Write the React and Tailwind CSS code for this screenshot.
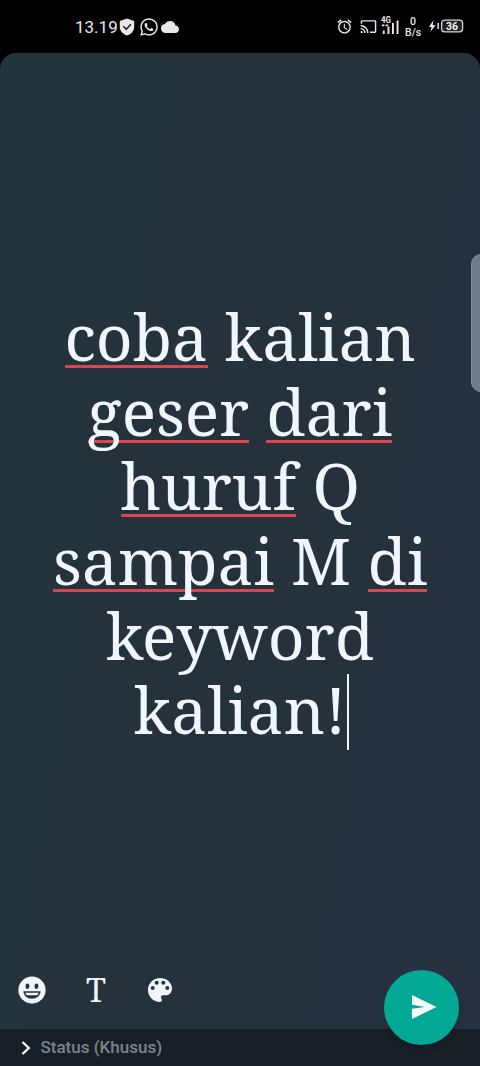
import React from "react";
import { MdAccessAlarm, MdCast, MdCloud } from "react-icons/md";
import { FaWhatsapp } from "react-icons/fa";

const lines = [
  [{ text: "coba", typo: true, width: "w-[143px]" }, { text: "kalian", width: "w-[190px]" }],
  [{ text: "geser", typo: true, width: "w-[161px]" }, { text: "dari", typo: true, width: "w-[126px]" }],
  [{ text: "huruf", typo: true, width: "w-[175px]" }, { text: "Q", width: "w-[46px]" }],
  [
    { text: "sampai", typo: true, width: "w-[221px]" },
    { text: "M", width: "w-[59px]" },
    { text: "di", typo: true, width: "w-[59px]" },
  ],
  [{ text: "keyword", width: "w-[266px]" }],
  [{ text: "kalian!", width: "w-[212px]", cursor: true }],
];

const ShieldIcon = () => (
  <svg viewBox="0 0 16 18" className="w-[16px] h-[18px]">
    <path d="M8 .5 15.200 3v6c0 4-3 7-7.200 8.600C3.800 16 .8 13 .8 9V3z" fill="#e8e8e8" />
    <path d="m4.300 8.300 2.900 2.900 4.700-4.900" fill="none" stroke="#111" strokeWidth="1.400" />
  </svg>
);

const SignalIcon = () => (
  <svg viewBox="0 0 18 18" className="w-[18px] h-[18px]" fill="#e8e8e8">
    <path d="M1.800 14.500h1.900V18H1.800zM6.500 10.500h1.900V18H6.500zM11 7h1.900v11H11zM15.600 4.500h1.900V18h-1.900z" />
    <path d="M.8 8.500h2.600v1.800H.8zM4.600 8.500h2.600v1.800H4.600z" />
    <text x="0" y="7" fontSize="8.500" fontWeight="700" fontFamily="Roboto, sans-serif" textLength="10" lengthAdjust="spacingAndGlyphs">
      4G
    </text>
  </svg>
);

const GrinIcon = () => (
  <svg viewBox="0 0 28 28" className="w-7 h-7">
    <circle cx="14" cy="14" r="13.600" fill="#f1f6fc" />
    <ellipse cx="9.500" cy="10.200" rx="1.900" ry="2.800" fill="#24323c" />
    <ellipse cx="18.500" cy="10.200" rx="1.900" ry="2.800" fill="#24323c" />
    <path d="M5.300 15.200h17.400c-.4 4.400-4 7.500-8.700 7.500s-8.300-3.100-8.700-7.500z" fill="#24323c" />
    <path d="M7.200 16.700h13.600c-.4 1.300-1 2-1.800 2.600H9c-.8-.6-1.400-1.300-1.800-2.600z" fill="#f1f6fc" />
  </svg>
);

const PaletteIcon = () => (
  <svg viewBox="3 3 18 18" className="w-6 h-6">
    <path
      d="M12 3c-4.970 0-9 4.030-9 9s4.030 9 9 9c.83 0 1.500-.67 1.500-1.500 0-.39-.15-.74-.39-1.010-.23-.26-.38-.61-.38-.99 0-.83.67-1.500 1.500-1.500H16c2.760 0 5-2.240 5-5 0-4.420-4.030-8-9-8z"
      fill="#f1f6fc"
    />
    <g fill="#24323c">
      <circle cx="6.500" cy="10.500" r="1.500" />
      <circle cx="9.500" cy="6.500" r="1.500" />
      <circle cx="14.500" cy="6.500" r="1.500" />
      <circle cx="17.500" cy="10.500" r="1.500" />
    </g>
  </svg>
);

const StatusBar = () => (
  <header className="h-[53px] shrink-0 flex justify-between text-[#e8e8e8] pl-[75px] pr-4 pt-[17px]">
    <div className="flex items-center h-5">
      <span className="text-[17px] leading-5 w-[42px]">13.19</span>
      <span className="ml-[2px]"><ShieldIcon /></span>
      <FaWhatsapp className="w-[20px] h-[20px] ml-[4px]" />
      <MdCloud className="w-[18px] h-[18px] ml-[2px]" />
    </div>
    <div className="flex items-center h-5">
      <MdAccessAlarm className="w-[17px] h-[17px] mb-px" />
      <MdCast className="w-[17px] h-[17px] ml-[7px] mb-px" />
      <span className="ml-[4px] mb-[4px]"><SignalIcon /></span>
      <div className="ml-[6px] w-4 text-center text-[10.500px] leading-[11px] font-medium">
        <div>0</div>
        <div>B/s</div>
      </div>
      <svg viewBox="0 0 35 14" className="w-[35px] h-[14px] ml-[8px] mb-[2px]">
        <path d="M4.500 1 0 8h2.600L1.500 13l5-7H3.700z" fill="#e8e8e8" />
        <path d="M9.200 4v6" stroke="#e8e8e8" strokeWidth="1.500" />
        <rect x="12.600" y="1.200" width="21" height="11.600" rx="3" fill="#222" stroke="#d8d8d8" strokeWidth="1.300" />
        <text x="23" y="10.800" textAnchor="middle" fontSize="10.500" fontWeight="700" fontFamily="Roboto, sans-serif" fill="#f2f2f2">
          36
        </text>
      </svg>
    </div>
  </header>
);

const Word = ({ word }) => (
  <span className={`relative h-[75px] text-center whitespace-nowrap flex justify-center ${word.width}`}>
    {word.typo && <span className="absolute left-0 right-0 top-[66px] h-[3px] bg-[#db4550]" />}
    <span className="relative">{word.text}</span>
    {word.cursor && <span className="absolute -right-[3px] top-[2px] w-[2px] h-[76px] bg-[#f1f6fc]" />}
  </span>
);

const App = () => {
  return (
    <div className="w-[480px] h-[1066px] bg-black flex flex-col overflow-hidden font-['Roboto',sans-serif]">
      <StatusBar />
      <main className="relative flex-1 flex flex-col rounded-t-[16px] overflow-hidden bg-[#25323c] bg-[linear-gradient(100deg,#22353b_0%,#25323b_30%,#25323c_70%,#253140_100%)]">
        <div className="h-[246px] shrink-0" />
        <div className="flex flex-col items-center font-['Noto_Serif',serif] text-[64px] leading-[75px] text-[#f1f6fc]">
          {lines.map((words, i) => (
            <div key={i} className="flex justify-center gap-[17.500px] h-[74.700px]">
              {words.map((word) => (
                <Word key={word.text} word={word} />
              ))}
            </div>
          ))}
        </div>
        <div className="mt-auto h-[76px] flex items-start pl-[18px] text-[#f1f6fc]">
          <div className="pt-[23px]"><GrinIcon /></div>
          <span className="ml-[40px] w-5 flex justify-center pt-[21px] text-[32.500px] leading-8 font-['Noto_Serif',serif]">
            T
          </span>
          <div className="ml-[42px] pt-[25px]"><PaletteIcon /></div>
        </div>
        <footer className="h-[37px] shrink-0 bg-[#172027] flex items-center pl-[21px]">
          <svg viewBox="0 0 10 14" className="w-[10px] h-[14px]">
            <path d="m1.500 1 6.300 6-6.300 6" fill="none" stroke="#f1f6fc" strokeWidth="2.400" />
          </svg>
          <span className="ml-[9.500px] pt-px text-[17px] font-medium text-[#7b848b]">Status (Khusus)</span>
        </footer>
        <button className="absolute left-[384px] top-[917px] w-[75px] h-[75px] rounded-full bg-[#03a995] shadow-md">
          <svg viewBox="0 0 25 24" className="absolute left-[28px] top-[25px] w-[25px] h-[24px]">
            <path d="M0 0 24.500 12 0 24V13.800L13 12 0 9.800z" fill="#f4f9fc" />
          </svg>
        </button>
        {/* edge panel handle */}
        <div className="absolute left-[471px] top-[201px] w-[20px] h-[138px] rounded-[12px] bg-[#6d7c86] border border-[#84929b]" />
      </main>
    </div>
  );
};

export default App;
